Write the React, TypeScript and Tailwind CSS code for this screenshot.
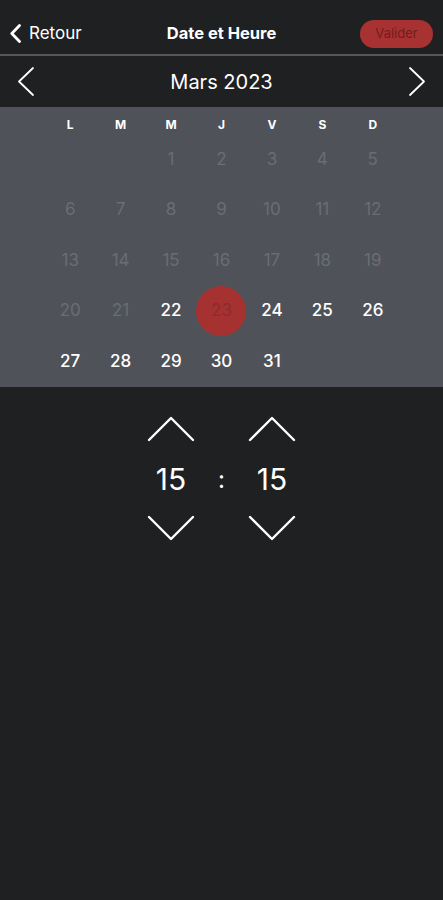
import { useState } from 'react';

const WEEKDAYS = ['L', 'M', 'M', 'J', 'V', 'S', 'D'];
const FIRST_OFFSET = 2; // 1 mars 2023 = mercredi
const DAYS_IN_MONTH = 31;
const TODAY = 22;

function Chevron({ dir, className, stroke = 2 }: { dir: 'left' | 'right' | 'up' | 'down'; className?: string; stroke?: number }) {
  const pts: Record<string, string> = {
    left: '16,2 2,15.5 16,29',
    right: '2,2 16,15.5 2,29',
    up: '2,24 24,2 46,24',
    down: '2,2 24,24 46,2',
  };
  const vb = dir === 'left' || dir === 'right' ? '0 0 18 31' : '0 0 48 26';
  return (
    <svg viewBox={vb} className={className} fill="none" stroke="white" strokeWidth={stroke} strokeLinecap="round" strokeLinejoin="round">
      <polyline points={pts[dir]} />
    </svg>
  );
}

export default function App() {
  const [selected, setSelected] = useState(23);
  const [hour, setHour] = useState(15);
  const [minute, setMinute] = useState(15);

  const cells: (number | null)[] = [];
  for (let i = 0; i < FIRST_OFFSET; i++) cells.push(null);
  for (let d = 1; d <= DAYS_IN_MONTH; d++) cells.push(d);
  const rows: (number | null)[][] = [];
  for (let i = 0; i < cells.length; i += 7) rows.push(cells.slice(i, i + 7));

  return (
    <div className="min-h-screen w-full bg-[#1f2022] text-white" style={{ fontFamily: 'Inter, "Liberation Sans", sans-serif' }}>
      {/* header */}
      <div className="relative flex h-[56px] items-center justify-between border-b-2 border-[#55575b] pl-[10px] pr-[10px] pt-[13px]">
        <button type="button" className="flex items-center gap-[8px] text-[17px] text-white">
          <svg viewBox="0 0 11 19" className="h-[19px] w-[11px]" fill="none" stroke="white" strokeWidth={2.8} strokeLinecap="round" strokeLinejoin="round">
            <polyline points="9.5,1.5 1.8,9.5 9.5,17.5" />
          </svg>
          Retour
        </button>
        <h1 className="absolute left-1/2 top-[12px] flex h-[42px] -translate-x-1/2 items-center text-[16.5px] font-bold">Date et Heure</h1>
        <button type="button" className="flex h-[28px] w-[73px] items-center justify-center rounded-full bg-[#a83232] text-[13px] text-[#741c1c]">
          Valider
        </button>
      </div>

      {/* month */}
      <div className="flex h-[51px] items-center justify-between px-[17px]">
        <Chevron dir="left" className="h-[31px] w-[18px]" stroke={1.8} />
        <span className="text-[20px]">Mars 2023</span>
        <Chevron dir="right" className="h-[31px] w-[18px]" stroke={1.8} />
      </div>

      {/* calendar */}
      <div className="bg-[#4f5259] px-[45px]">
        <div className="grid h-[27px] grid-cols-7 items-end pb-[2px]">
          {WEEKDAYS.map((w, i) => (
            <span key={i} className="text-center text-[12px] font-bold leading-[14px]">{w}</span>
          ))}
        </div>
        {rows.map((row, ri) => (
          <div key={ri} className="grid h-[50.5px] grid-cols-7">
            {Array.from({ length: 7 }).map((_, ci) => {
              const d = row[ci] ?? null;
              if (d === null) return <span key={ci} />;
              const past = d < TODAY;
              const isSel = d === selected;
              return (
                <div key={ci} className="flex items-center justify-center">
                  <button
                    type="button"
                    disabled={past}
                    onClick={() => setSelected(d)}
                    className={
                      isSel
                        ? 'flex h-[50px] w-[50px] items-center justify-center rounded-full bg-[#a63131] text-[17px] text-[#8a2c2c]'
                        : past
                          ? 'text-[17px] text-[#6a6d73]'
                          : 'text-[17px] font-medium text-white'
                    }
                  >
                    {d}
                  </button>
                </div>
              );
            })}
          </div>
        ))}
      </div>

      {/* time */}
      <div className="flex justify-center gap-[2px] pt-[29px]">
        <div className="flex w-[48px] flex-col items-center">
          <button type="button" onClick={() => setHour((h) => (h + 1) % 24)}>
            <Chevron dir="up" className="h-[26px] w-[48px]" stroke={2.4} />
          </button>
          <span className="mt-[19px] h-[36px] text-[30px] leading-[36px]">{hour}</span>
          <button type="button" className="mt-[18px]" onClick={() => setHour((h) => (h + 23) % 24)}>
            <Chevron dir="down" className="h-[26px] w-[48px]" stroke={2.4} />
          </button>
        </div>
        <div className="flex w-[49px] items-start justify-center pt-[46px] text-[24px] leading-[36px]">:</div>
        <div className="flex w-[48px] flex-col items-center">
          <button type="button" onClick={() => setMinute((m) => (m + 1) % 60)}>
            <Chevron dir="up" className="h-[26px] w-[48px]" stroke={2.4} />
          </button>
          <span className="mt-[19px] h-[36px] text-[30px] leading-[36px]">{minute}</span>
          <button type="button" className="mt-[18px]" onClick={() => setMinute((m) => (m + 59) % 60)}>
            <Chevron dir="down" className="h-[26px] w-[48px]" stroke={2.4} />
          </button>
        </div>
      </div>
    </div>
  );
}
